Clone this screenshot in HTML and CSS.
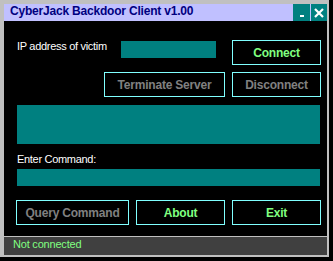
FILE: index.html
```html
<!DOCTYPE html>
<html lang="en">
<head>
    <meta charset="UTF-8">
    <meta name="viewport" content="width=device-width, initial-scale=1.0">
    <title>CyberJack Backdoor Client v1.00</title>
    <link rel="stylesheet" href="styles.css">
</head>
<body>
    <div class="window">
        <header class="titlebar">
            <span class="title">CyberJack Backdoor Client v1.00</span>
            <button class="tb-btn minimize"><span class="dash"></span></button>
            <button class="tb-btn close">
                <svg width="10" height="10" viewBox="0 0 10 10">
                    <path d="M1 1 L9 9 M9 1 L1 9" stroke="#fff" stroke-width="2.2" fill="none"/>
                </svg>
            </button>
        </header>

        <main class="content">
            <div class="row row-ip">
                <label class="label">IP address of victim</label>
                <div class="field ip-field"></div>
                <button class="btn on push-right">Connect</button>
            </div>
            <div class="row row-server">
                <button class="btn off terminate">Terminate Server</button>
                <button class="btn off">Disconnect</button>
            </div>
            <div class="field output"></div>
            <label class="label cmd-label">Enter Command:</label>
            <div class="field cmd-field"></div>
            <div class="row row-actions">
                <button class="btn off query">Query Command</button>
                <button class="btn on">About</button>
                <button class="btn on">Exit</button>
            </div>
        </main>

        <footer class="status">Not connected</footer>
    </div>
</body>
</html>
```

FILE: styles.css
```css
body {
    margin: 0;
    padding: 0;
    background: #000;
    font-family: 'Liberation Sans', Arial, sans-serif;
}

.window {
    width: 329px;
    height: 257px;
    box-sizing: border-box;
    padding: 4px 2px 2px 4px;
    background: #c0c0c0;
    display: flex;
    flex-direction: column;
}

.titlebar {
    height: 17px;
    background: #c0c0ff;
    display: flex;
    gap: 1px;
}

.title {
    flex: 1;
    padding-left: 6px;
    font-size: 12px;
    font-weight: bold;
    line-height: 15px;
    letter-spacing: -0.2px;
    color: #000080;
}

.tb-btn {
    width: 17px;
    height: 17px;
    padding: 0;
    border: none;
    background: #008080;
    display: flex;
    align-items: center;
    justify-content: center;
}

.tb-btn.close {
    width: 16px;
}

.dash {
    width: 4px;
    height: 2px;
    margin-top: 6px;
    background: #fff;
}

.content {
    height: 215px;
    box-sizing: border-box;
    padding: 19px 6px 11px 12px;
    background: #000;
    display: flex;
    flex-direction: column;
}

.row {
    display: flex;
    align-items: flex-start;
    height: 25px;
}

.row-server {
    margin-top: 7px;
    padding-left: 88px;
    gap: 7px;
}

.row-actions {
    margin-top: 14px;
    gap: 7px;
}

.label {
    color: #fff;
    font-size: 11px;
    line-height: 13px;
    letter-spacing: -0.3px;
    padding-left: 1px;
}

.field {
    background: #008080;
}

.ip-field {
    width: 95px;
    height: 17px;
    margin-top: 1px;
    margin-left: auto;
}

.output {
    height: 39px;
    margin: 8px 1px 0 1px;
}

.cmd-label {
    margin-top: 9px;
}

.cmd-field {
    height: 17px;
    margin: 3px 1px 0 1px;
}

.btn {
    width: 89px;
    height: 25px;
    padding: 0;
    border: 1px solid #80ffff;
    background: #000;
    font-family: 'Liberation Sans', Arial, sans-serif;
    font-size: 12px;
    font-weight: bold;
    letter-spacing: -0.2px;
}

.btn.on {
    color: #80ff80;
}

.btn.off {
    color: #808080;
}

.push-right {
    margin-left: 16px;
}

.terminate {
    width: 121px;
}

.query {
    width: 113px;
}

.status {
    height: 18px;
    box-sizing: border-box;
    margin-top: 1px;
    padding: 1px 9px 0;
    background: #404040;
    color: #80ff80;
    font-size: 11px;
    line-height: 13px;
    letter-spacing: -0.2px;
}
```
